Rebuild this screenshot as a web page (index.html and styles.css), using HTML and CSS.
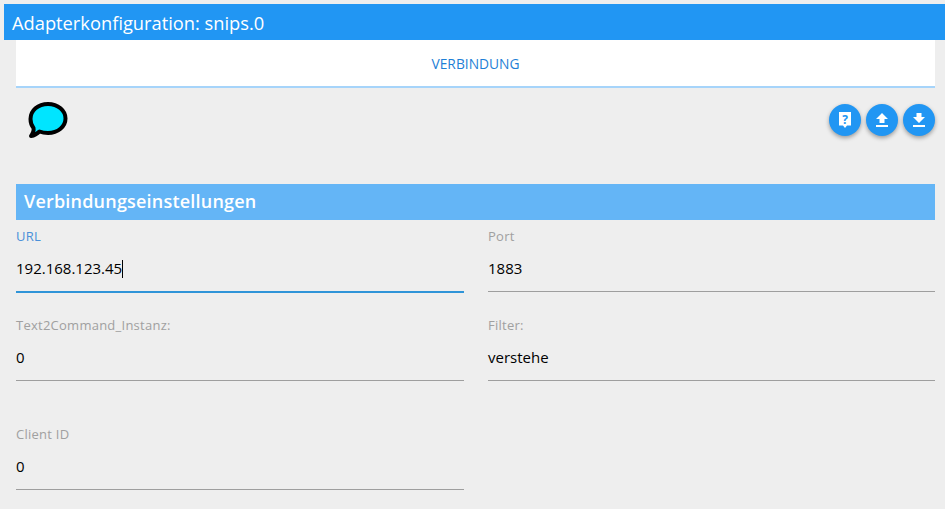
FILE: index.html
```html
<!DOCTYPE html>
<html lang="de">
<head>
<meta charset="utf-8">
<title>Adapterkonfiguration: snips.0</title>
<link rel="stylesheet" href="styles.css">
</head>
<body>
<div class="title-bar">Adapterkonfiguration: snips.0</div>
<div class="content">
  <div class="tabs"><span class="tab">VERBINDUNG</span></div>

  <div class="toolbar">
    <svg class="logo" width="42" height="38" viewBox="0 0 42 38">
      <path d="M4 35 C6 32 7 29 6.500 27 C4.500 24.500 3.500 21 3.500 18 C3.500 9.500 11 3 21 3 C31 3 38.500 9.500 38.500 17.500 C38.500 25.500 31 32 21 32 C18 32 15 31.500 12.500 30.500 C10 33 7 34.500 4 35 Z" fill="#00e5ff" stroke="#000" stroke-width="4" stroke-linejoin="round"/>
    </svg>
    <div class="actions">
      <button class="round-btn">
        <svg width="12" height="16" viewBox="0 0 12 16">
          <path d="M0 0 H12 V13.500 H8 L6 16 L4 13.500 H0 Z" fill="#fff"/>
          <text x="6" y="11.500" class="help-mark">?</text>
        </svg>
      </button>
      <button class="round-btn">
        <svg width="12" height="14" viewBox="0 0 12 14">
          <path d="M6 0 L12 6 H8.500 V10 H3.500 V6 H0 Z M0 12 H12 V14 H0 Z" fill="#fff"/>
        </svg>
      </button>
      <button class="round-btn">
        <svg width="12" height="14" viewBox="0 0 12 14">
          <path d="M3.500 0 H8.500 V4 H12 L6 10 L0 4 H3.500 Z M0 12 H12 V14 H0 Z" fill="#fff"/>
        </svg>
      </button>
    </div>
  </div>

  <h2 class="section-head">Verbindungseinstellungen</h2>

  <div class="fields">
    <div class="field focused">
      <label>URL</label>
      <div class="value">192.168.123.45<span class="caret"></span></div>
    </div>
    <div class="field">
      <label>Port</label>
      <div class="value">1883</div>
    </div>
    <div class="field">
      <label>Text2Command_Instanz:</label>
      <div class="value">0</div>
    </div>
    <div class="field">
      <label>Filter:</label>
      <div class="value">verstehe</div>
    </div>
    <div class="field lower">
      <label>Client ID</label>
      <div class="value">0</div>
    </div>
  </div>
</div>
</body>
</html>
```

FILE: styles.css
```css
html, body
{ margin: 0;
padding: 0;
height: 100%;
}

body
{ background: #eeeeee;
font-family: "Open Sans", "Noto Sans", sans-serif;
color: #000;
overflow: hidden;
padding-top: 4px;
box-sizing: border-box;
}

.title-bar
{ margin-left: 4px;
height: 36px;
line-height: 38px;
padding-left: 8px;
background: #2196f3;
color: #fff;
font-size: 18.300px;
}

.content
{ margin: 0 10px 0 16px;
}

.tabs
{ height: 46px;
background: #fff;
border-bottom: 2px solid #a6d4fa;
text-align: center;
line-height: 47px;
}

.tab
{ color: #1e7fd6;
font-size: 13.800px;
}

/* Logo and round buttons */

.toolbar
{ height: 96px;
display: flex;
justify-content: space-between;
align-items: flex-start;
}

.logo
{ margin: 13px 0 0 11px;
}

.actions
{ display: flex;
gap: 5px;
margin-top: 16px;
}

.round-btn
{ width: 32px;
height: 32px;
border: 0;
border-radius: 50%;
padding: 0;
background: #2196f3;
box-shadow: 0 2px 4px rgba(0,0,0,0.35);
display: flex;
align-items: center;
justify-content: center;
}

.help-mark
{ font-family: "Open Sans", sans-serif;
font-size: 12px;
font-weight: 700;
fill: #2196f3;
text-anchor: middle;
}

.section-head
{ margin: 0;
height: 36px;
line-height: 35px;
padding-left: 8px;
background: #64b5f6;
color: #fff;
font-size: 18px;
font-weight: 600;
letter-spacing: 0.2px;
}

/* Form */

.fields
{ display: grid;
grid-template-columns: 448px 447px;
column-gap: 24px;
}

.field
{ height: 89px;
}

.field.lower
{ height: 109px;
padding-top: 20px;
box-sizing: border-box;
}

.field label
{ display: block;
padding-top: 9px;
height: 18px;
line-height: 15px;
font-size: 13px;
letter-spacing: 0.25px;
color: #a0a0a0;
}

.field .value
{ height: 44px;
line-height: 42px;
font-size: 15px;
border-bottom: 1px solid #9e9e9e;
}

.field.focused label
{ color: #4a90d9;
}

.field.focused .value
{ border-bottom: 2px solid #2f94d8;
height: 44px;
}

.caret
{ display: inline-block;
width: 1px;
height: 18px;
background: #000;
vertical-align: -4px;
}
```
